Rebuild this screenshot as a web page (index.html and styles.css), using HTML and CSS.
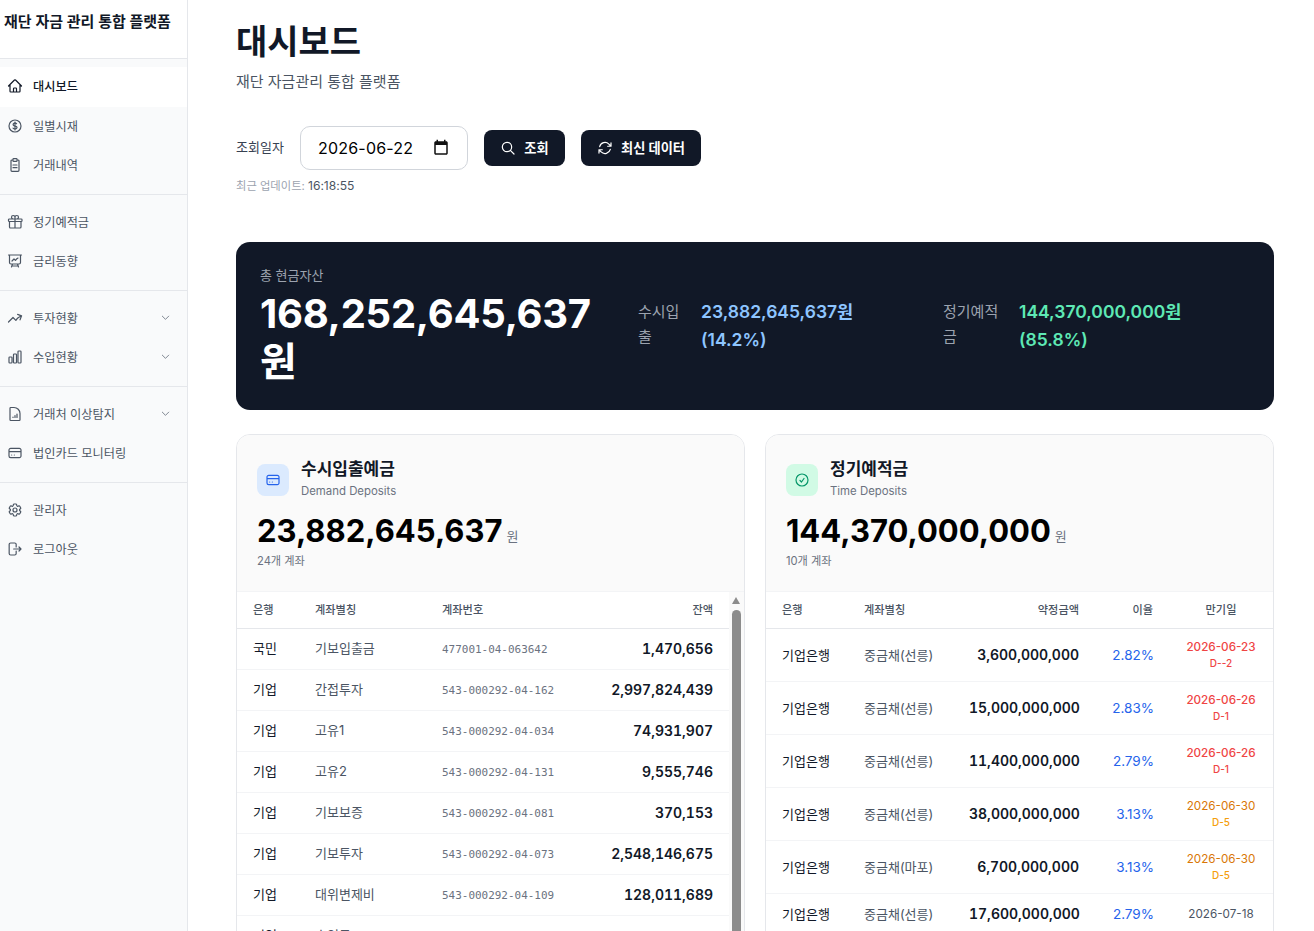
FILE: index.html
```html
<!DOCTYPE html>
<html lang="ko">
<head>
<meta charset="utf-8">
<title>대시보드</title>
<link rel="stylesheet" href="styles.css">
</head>
<body>
<div class="app">
  <aside class="sidebar">
    <div class="brand">재단 자금 관리 통합 플랫폼</div>
    <nav class="nav">
      <div class="group">
        <a class="item active"><svg class="ico" viewBox="0 0 24 24"><path d="M2.25 12l8.954-8.955c.44-.439 1.152-.439 1.591 0L21.75 12M4.5 9.75v10.125c0 .621.504 1.125 1.125 1.125H9.75v-4.875c0-.621.504-1.125 1.125-1.125h2.25c.621 0 1.125.504 1.125 1.125V21h4.125c.621 0 1.125-.504 1.125-1.125V9.75M8.25 21h8.25"/></svg><span>대시보드</span></a>
        <a class="item"><svg class="ico" viewBox="0 0 24 24"><path d="M12 6v12m-3-2.818l.879.659c1.171.879 3.07.879 4.242 0 1.172-.879 1.172-2.303 0-3.182C13.536 12.219 12.768 12 12 12c-.725 0-1.45-.22-2.003-.659-1.106-.879-1.106-2.303 0-3.182s2.9-.879 4.006 0l.415.33M21 12a9 9 0 11-18 0 9 9 0 0118 0z"/></svg><span>일별시재</span></a>
        <a class="item"><svg class="ico" viewBox="0 0 24 24"><path d="M9 4.500H7.500A1.500 1.500 0 006 6v14a1.500 1.500 0 001.500 1.500h9A1.500 1.500 0 0018 20V6a1.500 1.500 0 00-1.500-1.500H15M9 3.500A1 1 0 0110 2.500h4a1 1 0 011 1v2a1 1 0 01-1 1h-4a1 1 0 01-1-1zM9 12h6M9 16h6"/></svg><span>거래내역</span></a>
      </div>
      <div class="group">
        <a class="item"><svg class="ico" viewBox="0 0 24 24"><path d="M21 11.25v8.25a1.5 1.5 0 01-1.5 1.5H5.25a1.5 1.5 0 01-1.5-1.5v-8.25M12 4.875A2.625 2.625 0 109.375 7.5H12m0-2.625V7.5m0-2.625A2.625 2.625 0 1114.625 7.5H12m0 0V21m-8.625-9.75h18c.621 0 1.125-.504 1.125-1.125v-1.5c0-.621-.504-1.125-1.125-1.125h-18c-.621 0-1.125.504-1.125 1.125v1.5c0 .621.504 1.125 1.125 1.125z"/></svg><span>정기예적금</span></a>
        <a class="item"><svg class="ico" viewBox="0 0 24 24"><path d="M3.75 3v11.25A2.25 2.25 0 006 16.5h2.25M3.75 3h-1.5m1.5 0h16.5m0 0h1.5m-1.5 0v11.25A2.25 2.25 0 0118 16.5h-2.25m-7.5 0h7.5m-7.5 0l-1 3m8.5-3l1 3m0 0l.5 1.5m-.5-1.5h-9.5m0 0l-.5 1.5m.75-9l3-3 2.148 2.148A12.061 12.061 0 0116.5 7.605"/></svg><span>금리동향</span></a>
      </div>
      <div class="group">
        <a class="item"><svg class="ico" viewBox="0 0 24 24"><path d="M2.25 18L9 11.25l4.306 4.307a11.95 11.95 0 015.814-5.519l2.74-1.22m0 0l-5.94-2.28m5.94 2.28l-2.28 5.941"/></svg><span>투자현황</span><svg class="chev" viewBox="0 0 24 24"><path d="M5 9l7 7 7-7"/></svg></a>
        <a class="item"><svg class="ico" viewBox="0 0 24 24"><path d="M3 13.125C3 12.504 3.504 12 4.125 12h2.25c.621 0 1.125.504 1.125 1.125v6.75C7.5 20.496 6.996 21 6.375 21h-2.25A1.125 1.125 0 013 19.875v-6.75zM9.75 8.625c0-.621.504-1.125 1.125-1.125h2.25c.621 0 1.125.504 1.125 1.125v11.25c0 .621-.504 1.125-1.125 1.125h-2.25a1.125 1.125 0 01-1.125-1.125V8.625zM16.5 4.125c0-.621.504-1.125 1.125-1.125h2.25C20.496 3 21 3.504 21 4.125v15.75c0 .621-.504 1.125-1.125 1.125h-2.25a1.125 1.125 0 01-1.125-1.125V4.125z"/></svg><span>수입현황</span><svg class="chev" viewBox="0 0 24 24"><path d="M5 9l7 7 7-7"/></svg></a>
      </div>
      <div class="group">
        <a class="item"><svg class="ico" viewBox="0 0 24 24"><path d="M9 17.250v-.5m3 .5v-3M15 17.250V12m-4.500-9.750H5.625c-.621 0-1.125.504-1.125 1.125v17.250c0 .621.504 1.125 1.125 1.125h12.750c.621 0 1.125-.504 1.125-1.125V11.250a9 9 0 00-9-9z"/></svg><span>거래처 이상탐지</span><svg class="chev" viewBox="0 0 24 24"><path d="M5 9l7 7 7-7"/></svg></a>
        <a class="item"><svg class="ico" viewBox="0 0 24 24"><path d="M5.500 5h13A2.500 2.500 0 0121 7.500v9a2.500 2.500 0 01-2.500 2.500h-13A2.500 2.500 0 013 16.500v-9A2.500 2.500 0 015.500 5zM3 10h18M7 15h.01M11 15h.01"/></svg><span>법인카드 모니터링</span></a>
      </div>
      <div class="group">
        <a class="item"><svg class="ico" viewBox="0 0 24 24"><path d="M9.594 3.94c.09-.542.56-.94 1.11-.94h2.593c.55 0 1.02.398 1.11.94l.213 1.281c.063.374.313.686.645.87.074.04.147.083.22.127.324.196.72.257 1.075.124l1.217-.456a1.125 1.125 0 011.37.49l1.296 2.247a1.125 1.125 0 01-.26 1.431l-1.003.827c-.293.24-.438.613-.431.992a6.759 6.759 0 010 .255c-.007.378.138.75.43.99l1.005.828c.424.35.534.954.26 1.43l-1.298 2.247a1.125 1.125 0 01-1.369.491l-1.217-.456c-.355-.133-.75-.072-1.076.124a6.57 6.57 0 01-.22.128c-.331.183-.581.495-.644.869l-.213 1.28c-.09.543-.56.941-1.11.941h-2.594c-.55 0-1.02-.398-1.11-.94l-.213-1.281c-.062-.374-.312-.686-.644-.87a6.52 6.52 0 01-.22-.127c-.325-.196-.72-.257-1.076-.124l-1.217.456a1.125 1.125 0 01-1.369-.49l-1.297-2.247a1.125 1.125 0 01.26-1.431l1.004-.827c.292-.24.437-.613.43-.992a6.932 6.932 0 010-.255c.007-.378-.138-.75-.43-.99l-1.004-.828a1.125 1.125 0 01-.26-1.43l1.297-2.247a1.125 1.125 0 011.37-.491l1.216.456c.356.133.751.072 1.076-.124.072-.044.146-.087.22-.128.332-.183.582-.495.644-.869l.214-1.281zM15 12a3 3 0 11-6 0 3 3 0 016 0z"/></svg><span>관리자</span></a>
        <a class="item"><svg class="ico" viewBox="0 0 24 24"><path d="M13.750 9V5.250A2.250 2.250 0 0011.500 3h-6a2.250 2.250 0 00-2.250 2.250v13.500A2.250 2.250 0 005.500 21h6a2.250 2.250 0 002.250-2.250V15M10 12h11m0 0l-3-3m3 3l-3 3"/></svg><span>로그아웃</span></a>
      </div>
    </nav>
  </aside>

  <main class="main">
    <header class="head">
      <h1 class="title">대시보드</h1>
      <p class="subtitle">재단 자금관리 통합 플랫폼</p>
    </header>

    <div class="filter">
      <label class="filter-label" for="d">조회일자</label>
      <div class="date-box">
        <input class="date" id="d" type="text" value="2026-06-22">
        <svg class="cal" viewBox="0 0 24 24"><path d="M19 3h-1V1h-2v2H8V1H6v2H5c-1.110 0-1.990.9-1.990 2L3 19c0 1.100.89 2 2 2h14c1.100 0 2-.9 2-2V5c0-1.100-.9-2-2-2zm0 16H5V8h14v11z"/></svg>
      </div>
      <button class="btn"><svg class="btn-ico" viewBox="0 0 24 24"><circle cx="10.500" cy="10.500" r="7"/><path d="M21 21l-5.500-5.500"/></svg>조회</button>
      <button class="btn"><svg class="btn-ico" viewBox="0 0 24 24"><path d="M16.023 9.348h4.992v-.001M2.985 19.644v-4.992m0 0h4.992m-4.993 0l3.181 3.183a8.250 8.250 0 0013.803-3.700M4.031 9.865a8.250 8.250 0 0113.803-3.700l3.181 3.182m0-4.991v4.990"/></svg>최신 데이터</button>
    </div>
    <p class="updated">최근 업데이트: <span class="time">16:18:55</span></p>

    <section class="hero">
      <div class="hero-total">
        <div class="hero-label">총 현금자산</div>
        <div class="hero-num">168,252,645,637원</div>
      </div>
      <div class="hero-stat stat-a">
        <div class="stat-label">수시입출</div>
        <div class="stat-val blue">23,882,645,637원<br>(14.2%)</div>
      </div>
      <div class="hero-stat stat-b">
        <div class="stat-label">정기예적금</div>
        <div class="stat-val green">144,370,000,000원<br>(85.8%)</div>
      </div>
    </section>

    <div class="cards">
      <section class="card">
        <div class="card-top">
          <div class="card-title">
            <div class="badge badge-blue"><svg class="badge-ico" viewBox="0 0 24 24"><path d="M5.500 5h13A2.500 2.500 0 0121 7.500v9a2.500 2.500 0 01-2.500 2.500h-13A2.500 2.500 0 013 16.500v-9A2.500 2.500 0 015.500 5zM3 10h18M7 15h.01M11 15h.01"/></svg></div>
            <div><h2 class="card-h">수시입출예금</h2><div class="card-en">Demand Deposits</div></div>
          </div>
          <div class="amount"><strong>23,882,645,637</strong><span>원</span></div>
          <div class="count">24개 계좌</div>
        </div>
        <div class="scroll">
          <table class="tbl tbl-a">
            <thead><tr><th>은행</th><th>계좌별칭</th><th>계좌번호</th><th class="r">잔액</th></tr></thead>
            <tbody>
              <tr><td class="bank">국민</td><td class="alias">기보입출금</td><td class="acct">477001-04-063642</td><td class="money">1,470,656</td></tr>
              <tr><td class="bank">기업</td><td class="alias">간접투자</td><td class="acct">543-000292-04-162</td><td class="money">2,997,824,439</td></tr>
              <tr><td class="bank">기업</td><td class="alias">고유1</td><td class="acct">543-000292-04-034</td><td class="money">74,931,907</td></tr>
              <tr><td class="bank">기업</td><td class="alias">고유2</td><td class="acct">543-000292-04-131</td><td class="money">9,555,746</td></tr>
              <tr><td class="bank">기업</td><td class="alias">기보보증</td><td class="acct">543-000292-04-081</td><td class="money">370,153</td></tr>
              <tr><td class="bank">기업</td><td class="alias">기보투자</td><td class="acct">543-000292-04-073</td><td class="money">2,548,146,675</td></tr>
              <tr><td class="bank">기업</td><td class="alias">대위변제비</td><td class="acct">543-000292-04-109</td><td class="money">128,011,689</td></tr>
              <tr class="next"><td class="bank">기업</td><td class="alias">수입금</td><td class="acct">543-000292-04-125</td><td class="money">45,210,300</td></tr>
            </tbody>
          </table>
          <div class="sbar"><div class="sbar-up"></div><div class="sbar-thumb"></div></div>
        </div>
      </section>

      <section class="card">
        <div class="card-top">
          <div class="card-title">
            <div class="badge badge-green"><svg class="badge-ico" viewBox="0 0 24 24"><path d="M9 12.750L11.250 15 15 9.750M21 12a9 9 0 11-18 0 9 9 0 0118 0z"/></svg></div>
            <div><h2 class="card-h">정기예적금</h2><div class="card-en">Time Deposits</div></div>
          </div>
          <div class="amount"><strong>144,370,000,000</strong><span>원</span></div>
          <div class="count">10개 계좌</div>
        </div>
        <div class="plain">
          <table class="tbl tbl-b">
            <thead><tr><th>은행</th><th>계좌별칭</th><th class="r">약정금액</th><th class="r">이율</th><th class="c">만기일</th></tr></thead>
            <tbody>
              <tr><td class="bank">기업은행</td><td class="alias">중금채(선릉)</td><td class="money">3,600,000,000</td><td class="rate">2.82%</td><td class="due red"><div>2026-06-23</div><div class="dday">D--2</div></td></tr>
              <tr><td class="bank">기업은행</td><td class="alias">중금채(선릉)</td><td class="money">15,000,000,000</td><td class="rate">2.83%</td><td class="due red"><div>2026-06-26</div><div class="dday">D-1</div></td></tr>
              <tr><td class="bank">기업은행</td><td class="alias">중금채(선릉)</td><td class="money">11,400,000,000</td><td class="rate">2.79%</td><td class="due red"><div>2026-06-26</div><div class="dday">D-1</div></td></tr>
              <tr><td class="bank">기업은행</td><td class="alias">중금채(선릉)</td><td class="money">38,000,000,000</td><td class="rate">3.13%</td><td class="due orange"><div>2026-06-30</div><div class="dday">D-5</div></td></tr>
              <tr><td class="bank">기업은행</td><td class="alias">중금채(마포)</td><td class="money">6,700,000,000</td><td class="rate">3.13%</td><td class="due orange"><div>2026-06-30</div><div class="dday">D-5</div></td></tr>
              <tr><td class="bank">기업은행</td><td class="alias">중금채(선릉)</td><td class="money">17,600,000,000</td><td class="rate">2.79%</td><td class="due"><div>2026-07-18</div></td></tr>
            </tbody>
          </table>
        </div>
      </section>
    </div>
  </main>
</div>
</body>
</html>
```
FILE: styles.css
```css
* { box-sizing: border-box; }
html, body { margin: 0; height: 100%; overflow: hidden; background: #fff; }
body { font-family: Inter, "Noto Sans CJK KR", "Noto Sans", sans-serif; color: #111827; }
.app { display: flex; height: 931px; overflow: hidden; }

.sidebar { width: 188px; flex: none; background: #f9fafb; border-right: 1px solid #e5e7eb; }
.brand { height: 59px; padding: 12px 0 0 4px; background: #fff; border-bottom: 1px solid #e5e7eb; font-size: 15px; font-weight: 600; line-height: 20px; white-space: nowrap; color: #111827; }
.nav { padding-top: 8px; }
.group { padding-bottom: 9px; margin-bottom: 8px; border-bottom: 1px solid #e5e7eb; }
.group:last-child { border-bottom: 0; }
.item { display: flex; align-items: center; height: 39px; padding: 0 16px 2px 7px; font-size: 12.2px; color: #4b5563; gap: 10px; }
.group:first-child .item:first-child { height: 40px; padding-bottom: 2px; }
.item span { flex: 1; white-space: nowrap; }
.item.active { background: #fff; color: #111827; font-weight: 500; }
.ico { width: 16px; height: 16px; flex: none; fill: none; stroke: currentColor; stroke-width: 1.8; stroke-linecap: round; stroke-linejoin: round; }
.chev { width: 11px; height: 11px; flex: none; fill: none; stroke: #4b5563; stroke-width: 1.5; stroke-linecap: round; stroke-linejoin: round; }

.main { flex: 1; min-width: 0; padding: 18px 40px 0 48px; }
.title { margin: 0; font-size: 34px; line-height: 48px; font-weight: 700; color: #111827; }
.subtitle { margin: 6px 0 0; font-size: 15px; line-height: 20px; color: #4b5563; }

.filter { display: flex; align-items: center; margin-top: 34px; }
.filter-label { width: 64px; padding-bottom: 4px; font-size: 13px; color: #374151; }
.date-box { display: flex; align-items: center; width: 168px; height: 44px; padding: 0 17px; margin-right: 16px; border: 1px solid #d1d5db; border-radius: 10px; background: #fff; }
.date { flex: 1; min-width: 0; padding: 0; border: 0; outline: 0; background: transparent; color: #000; font: 400 16px Inter, sans-serif; letter-spacing: .2px; }
.cal { width: 18px; height: 18px; flex: none; fill: #111; }
.btn { display: flex; align-items: center; justify-content: center; gap: 8px; min-width: 81px; height: 36px; padding: 0 16px 1px; margin-right: 16px; border: 0; border-radius: 8px; background: #111827; color: #fff; font: 600 13.2px Inter, "Noto Sans CJK KR", sans-serif; }
.btn-ico { width: 16px; height: 16px; fill: none; stroke: #fff; stroke-width: 1.8; stroke-linecap: round; stroke-linejoin: round; }
.updated { margin: 7px 0 0; font-size: 11.3px; line-height: 18px; color: #9ca3af; }
.time { font-size: 12.1px; color: #4b5563; }

.hero { display: grid; grid-template-columns: 354px 281px 1fr; column-gap: 24px; align-items: center; height: 168px; margin-top: 47px; padding: 24px; border-radius: 14px; background: #111827; color: #fff; }
.hero-label { font-size: 13px; line-height: 20px; color: #9ca3af; margin-top: -2px; }
.hero-num { margin-top: 5px; font-size: 40px; line-height: 47.5px; font-weight: 700; letter-spacing: -.27px; }
.hero-stat { display: flex; align-self: center; }
.stat-label { font-size: 15px; line-height: 24.5px; color: #9ca3af; flex: none; padding-top: 2px; }
.stat-a .stat-label { width: 44px; margin-right: 19px; }
.stat-b .stat-label { width: 58px; margin-right: 18px; }
.stat-val { font-size: 17.5px; line-height: 28px; font-weight: 600; white-space: nowrap; }
.blue { color: #8ec5ff; }
.green { color: #5ee9b5; }

.cards { display: grid; grid-template-columns: 1fr 1fr; gap: 20px; margin-top: 24px; }
.card { height: 620px; border: 1px solid #e5e7eb; border-radius: 14px; background: #fff; overflow: hidden; }
.card-top { height: 157px; padding: 20px 20px 0; background: #fafafa; border-bottom: 1px solid #f3f4f6; }
.card-title { display: flex; align-items: center; gap: 12px; }
.badge { display: flex; align-items: center; justify-content: center; width: 32px; height: 32px; margin-top: 6px; border-radius: 8px; }
.badge-blue { background: #dbeafe; color: #2563eb; }
.badge-green { background: #d1fae5; color: #059669; }
.badge-ico { width: 16px; height: 16px; fill: none; stroke: currentColor; stroke-width: 1.8; stroke-linecap: round; stroke-linejoin: round; }
.card-h { margin: 0; font-size: 17px; line-height: 28px; font-weight: 600; color: #111827; }
.card-en { font-size: 11.4px; line-height: 16px; color: #6b7280; }
.amount { display: flex; align-items: center; gap: 4px; margin-top: 10px; line-height: 44px; }
.amount strong { font-size: 31px; font-weight: 700; color: #000; }
.amount span { margin-top: 10px; font-size: 13px; line-height: 20px; color: #6b7280; }
.count { margin-top: -1px; font-size: 11.2px; line-height: 18px; color: #6b7280; }

.scroll { position: relative; height: 461px; padding-right: 15px; overflow: hidden; }
.plain { height: 461px; overflow: hidden; }
.sbar { position: absolute; top: 0; right: 0; bottom: 0; width: 15px; background: #fafafa; }
.sbar-up { width: 0; margin: 5px 0 0 3px; border: 4.5px solid transparent; border-top: 0; border-bottom: 7px solid #8c8c8c; }
.sbar-thumb { width: 9px; height: 400px; margin: 6px 0 0 3px; border-radius: 4.5px; background: #8c8c8c; }

.tbl { width: 100%; border-collapse: collapse; table-layout: fixed; font-size: 13px; }
.tbl th { height: 36px; padding: 0 16px 2px; text-align: left; font-size: 11.2px; font-weight: 500; color: #4b5563; border-bottom: 1px solid #e5e7eb; }
.tbl th.r { text-align: right; }
.tbl th.c { text-align: center; }
.tbl td { padding: 0 16px; border-bottom: 1px solid #f3f4f6; white-space: nowrap; }
.tbl-a td { height: 41px; padding-bottom: 2px; }
.tbl-b td { height: 53px; }
.tbl-b tr:last-child td { height: 41px; }
.tbl-a th:nth-child(1) { width: 62px; }
.tbl-a th:nth-child(2) { width: 127px; }
.tbl-a th:nth-child(3) { width: 160px; }
.tbl-b th:nth-child(1) { width: 82px; }
.tbl-b th:nth-child(2) { width: 105px; }
.tbl-b th:nth-child(3) { width: 142px; }
.tbl-b th:nth-child(4) { width: 74px; }
.bank { color: #111827; font-size: 13px; }
.alias { color: #4b5563; font-size: 13px; }
.tbl-a .acct { padding-top: 2px; padding-bottom: 0; font-family: "DejaVu Sans Mono", monospace; font-size: 10.96px; color: #6b7280; }
.money { text-align: right; font-size: 14px; font-weight: 600; color: #111827; font-variant-numeric: tabular-nums; }
.tbl-a .money { padding-bottom: 0; }
.tbl-a .next .money, .tbl-a .next .acct { padding-top: 6px; }
.tbl .rate { padding-right: 15px; text-align: right; font-size: 13.5px; color: #2563eb; }
.due { text-align: center; font-size: 11.7px; line-height: 16px; color: #4b5563; padding: 0 !important; }
.dday { font-size: 10px; line-height: 16px; font-weight: 500; }
.red { color: #ef4444; font-weight: 500; }
.orange { color: #d97706; }
.orange .dday { color: #f59e0b; }
```
